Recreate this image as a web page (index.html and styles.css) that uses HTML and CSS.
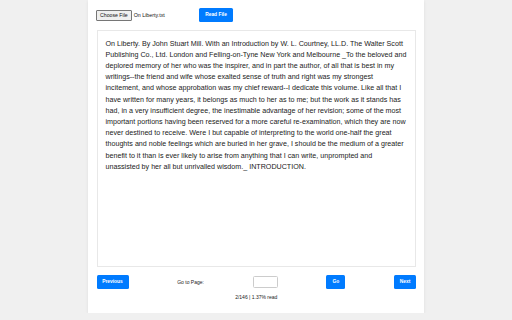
FILE: index.html
```html
<!DOCTYPE html>
<html>
<head>
<meta charset="utf-8">
<link rel="stylesheet" href="styles.css">
</head>
<body>
<div class="page">
  <div class="top">
    <div class="file">
      <span class="choose">Choose File</span>
      <span class="fname">On Liberty.txt</span>
    </div>
    <button class="btn read">Read File</button>
  </div>
  <div class="reader">On Liberty. By John Stuart Mill. With an Introduction by W. L. Courtney, LL.D. The Walter Scott Publishing Co., Ltd. London and Felling-on-Tyne New York and Melbourne _To the beloved and deplored memory of her who was the inspirer, and in part the author, of all that is best in my writings--the friend and wife whose exalted sense of truth and right was my strongest incitement, and whose approbation was my chief reward--I dedicate this volume. Like all that I have written for many years, it belongs as much to her as to me; but the work as it stands has had, in a very insufficient degree, the inestimable advantage of her revision; some of the most important portions having been reserved for a more careful re-examination, which they are now never destined to receive. Were I but capable of interpreting to the world one-half the great thoughts and noble feelings which are buried in her grave, I should be the medium of a greater benefit to it than is ever likely to arise from anything that I can write, unprompted and unassisted by her all but unrivalled wisdom._ INTRODUCTION.</div>
  <div class="nav">
    <button class="btn prev">Previous</button>
    <span class="label">Go to Page:</span>
    <input class="page-input" type="text">
    <button class="btn go">Go</button>
    <button class="btn next">Next</button>
  </div>
  <div class="status">2/146 | 1.37% read</div>
</div>
</body>
</html>
```
FILE: styles.css
```css
html, body {
  margin: 0;
  padding: 0;
  background: #f0f0f0;
  font-family: "Liberation Sans", Arial, sans-serif;
}
.page {
  width: 336px;
  margin: 0 auto;
  background: #ffffff;
  box-sizing: border-box;
  padding: 8px 8px 0 8.5px;
  height: 313px;
  box-shadow: 0 1px 3px rgba(0,0,0,0.08);
}
.top {
  display: flex;
  align-items: center;
  height: 14px;
}
.file {
  display: flex;
  align-items: center;
  width: 102.5px;
}
.choose {
  font-size: 5.2px;
  color: #111;
  background: #efefef;
  border: 0.5px solid #767676;
  border-radius: 1px;
  padding: 1.5px 3px;
  line-height: 6px;
  margin-left: -0.5px;
}
.fname {
  font-size: 5.3px;
  color: #111;
  margin-left: 2px;
}
.btn {
  font-family: "Liberation Sans", Arial, sans-serif;
  font-weight: bold;
  font-size: 4.9px;
  color: #fff;
  background: #007bff;
  border: none;
  border-radius: 1.5px;
  height: 14px;
  padding: 0 6px;
  margin: 0;
  line-height: 14px;
}
.read {
  width: 34px;
  padding: 0;
}
.reader {
  margin-top: 8px;
  height: 237px;
  box-sizing: border-box;
  border: 1px solid #e8e8e8;
  padding: 7.5px 8px;
  font-size: 7.15px;
  line-height: 11.2px;
  color: #222;
}
.nav {
  margin-top: 8px;
  display: flex;
  justify-content: space-between;
  align-items: center;
  height: 14px;
}
.prev { width: 32px; padding: 0; }
.go { width: 19px; padding: 0; }
.next { width: 22px; padding: 0; }
.label {
  font-size: 5px;
  color: #222;
}
.page-input {
  width: 25px;
  height: 12px;
  box-sizing: border-box;
  border: 0.5px solid #ccc;
  border-radius: 1.5px;
  padding: 0;
  margin: 0;
}
.status {
  text-align: center;
  font-size: 5px;
  color: #222;
  margin-top: 4.5px;
  line-height: 6px;
}
```
